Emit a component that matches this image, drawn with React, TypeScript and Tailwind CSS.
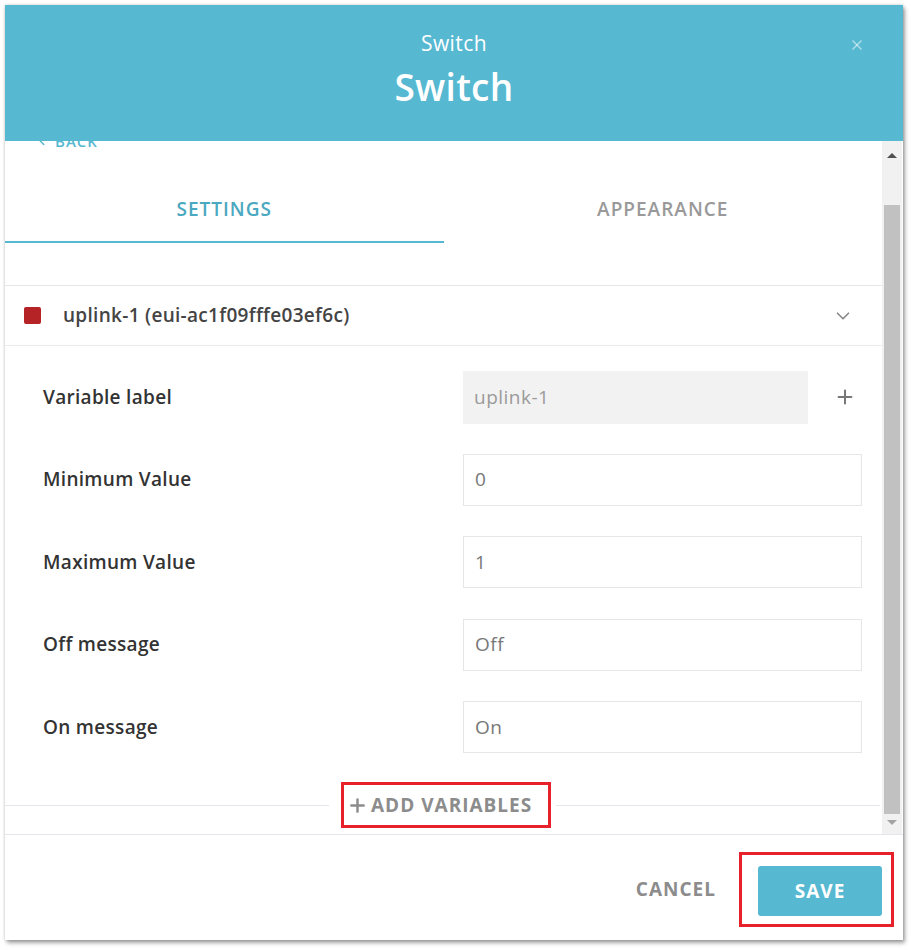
import React from "react";
import { ChevronDown, ChevronLeft, Plus, X } from "lucide-react";

type Field = {
  key: string;
  label: string;
  value: string;
  locked?: boolean;
};

const fields: Field[] = [
  { key: "label", label: "Variable label", value: "uplink-1", locked: true },
  { key: "min", label: "Minimum Value", value: "0" },
  { key: "max", label: "Maximum Value", value: "1" },
  { key: "off", label: "Off message", value: "Off" },
  { key: "on", label: "On message", value: "On" },
];

const FieldRow = ({ field }: { field: Field }) => (
  <div className="flex items-center h-[52px]">
    <span className="w-[458px] pl-[38px] text-[19px] tracking-[0.3px] font-semibold text-[#333]">
      {field.label}
    </span>
    {field.locked ? (
      <div className="flex items-center flex-1">
        <div className="w-[345px] h-[53px] bg-[#f2f2f2] flex items-center px-[11px] text-[19px] tracking-[0.5px] text-[#9a9a9a]">
          {field.value}
        </div>
        <Plus className="ml-[26px] h-[22px] w-[22px] text-[#777]" strokeWidth={2.2} />
      </div>
    ) : (
      <div className="w-[399px] h-[52px] border border-[#e6e6e6] flex items-center px-[11px] text-[19px] tracking-[0.5px] text-[#777]">
        {field.value}
      </div>
    )}
  </div>
);

const Scrollbar = () => (
  <div className="w-[20px] bg-[#f1f1f1] flex flex-col items-center">
    <div className="h-[20px] flex items-end justify-center pb-[3px]">
      <div className="w-0 h-0 border-l-[5px] border-r-[5px] border-b-[5px] border-l-transparent border-r-transparent border-b-[#505050]" />
    </div>
    <div className="flex-1 w-full pt-[44px] px-[2px]">
      <div className="w-full h-[609px] bg-[#c1c1c1]" />
    </div>
    <div className="h-[20px] flex items-start justify-center pt-[6px]">
      <div className="w-0 h-0 border-l-[5px] border-r-[5px] border-t-[5px] border-l-transparent border-r-transparent border-t-[#a3a3a3]" />
    </div>
  </div>
);

export default function App() {
  return (
    <div
      className="min-h-screen bg-white pt-[5px] pl-[5px]"
      style={{ fontFamily: "'Open Sans', 'Noto Sans', sans-serif" }}
    >
      <div className="w-[898px] h-[935px] bg-white flex flex-col shadow-[0_0_3px_rgba(0,0,0,0.2),2px_3px_4px_rgba(0,0,0,0.35)]">
        {/* header */}
        <div className="relative h-[136px] bg-[#56b8d1] flex flex-col items-center text-white">
          <div className="pt-[24px] text-[21px] tracking-[0.4px] leading-[28px] font-medium">Switch</div>
          <div className="mt-[8px] text-[37px] tracking-[0.3px] leading-[44px] font-semibold">Switch</div>
          <X className="absolute right-[38px] top-[32px] h-[16px] w-[16px] text-white/50" strokeWidth={2.5} />
        </div>

        {/* body */}
        <div className="h-[694px] flex border-b border-[#e3e6ea]">
          <div className="flex-1 overflow-hidden flex flex-col">
            <div className="-mt-[10px] h-[20px] flex items-center gap-[6px] pl-[30px] text-[15px] text-[#56b8d1] font-semibold tracking-[1px]">
              <ChevronLeft className="h-[14px] w-[14px]" strokeWidth={2.5} />
              <span>BACK</span>
            </div>

            <div className="mt-[27px] flex">
              <div className="w-1/2 h-[65px] flex items-center justify-center border-b-2 border-[#56b8d1] text-[19px] tracking-[1px] font-semibold text-[#4aa8c0]">
                SETTINGS
              </div>
              <div className="w-1/2 h-[65px] flex items-center justify-center border-b-2 border-transparent text-[19px] tracking-[1px] font-semibold text-[#999]">
                APPEARANCE
              </div>
            </div>

            <div className="mt-[42px] border-t border-[#e6e6e6]" />
            <div className="h-[60px] flex items-center border-b border-[#ececec] pl-[19px] pr-[28px]">
              <div className="w-[17px] h-[17px] rounded-[2px] bg-[#b52326]" />
              <span className="ml-[22px] flex-1 text-[19px] tracking-[0.3px] font-semibold text-[#444]">
                uplink-1 (eui-ac1f09fffe03ef6c)
              </span>
              <ChevronDown className="h-[22px] w-[22px] text-[#888]" strokeWidth={1.8} />
            </div>

            <div className="mt-[25px] flex flex-col gap-[30.5px]">
              {fields.map((field) => (
                <FieldRow key={field.key} field={field} />
              ))}
            </div>

            <div className="mt-[29px] flex items-center">
              <div className="flex-1 h-px bg-[#e3e6ea]" />
              <div className="ml-[12px] mr-[5px] w-[210px] h-[46px] border-[3px] border-[#e8202a] flex items-center pl-[3px] gap-[3px] text-[19px] tracking-[1px] font-bold text-[#8c8c8c]">
                <Plus className="h-[21px] w-[21px]" strokeWidth={2.8} />
                <span>ADD VARIABLES</span>
              </div>
              <div className="flex-1 h-px bg-[#e3e6ea] mr-[2px]" />
            </div>
          </div>
          <Scrollbar />
          <div className="w-px" />
        </div>

        {/* footer */}
        <div className="flex-1 flex justify-end items-start pt-[17px] pr-[9px]">
          <div className="h-[75px] flex items-center mr-[23px]">
            <button className="text-[19px] tracking-[1px] font-bold text-[#8c8c8c]">CANCEL</button>
          </div>
          <div className="border-[3px] border-[#e8202a] pl-[16px] pr-[9px] pt-[11px] pb-[8px]">
            <button className="w-[124px] h-[50px] rounded-[3px] bg-[#56b8d1] text-white text-[19px] tracking-[1px] font-bold">
              SAVE
            </button>
          </div>
        </div>
      </div>
    </div>
  );
}
